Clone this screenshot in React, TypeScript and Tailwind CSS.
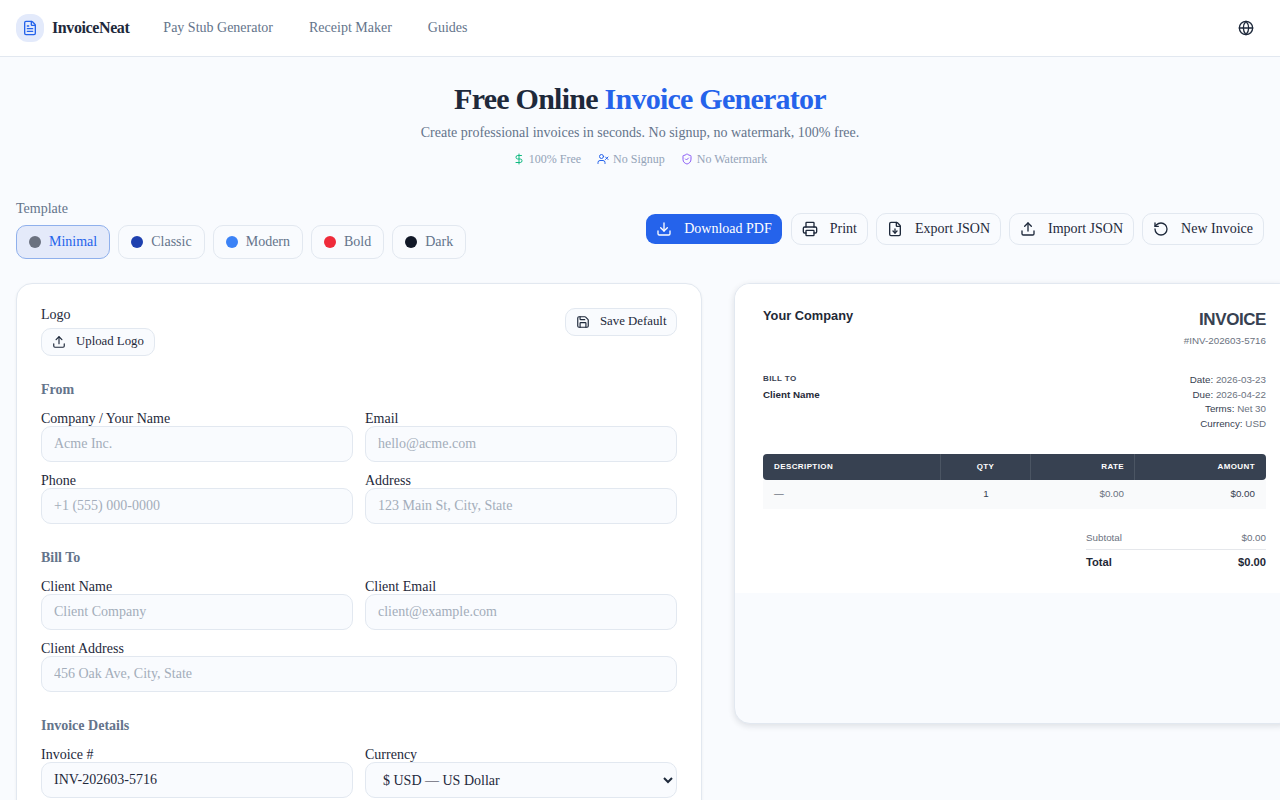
// App.tsx
import React from "react";
import {
  DollarSign,
  Download,
  FileDown,
  FileText,
  Globe,
  Printer,
  RotateCcw,
  Save,
  ShieldCheck,
  Upload,
  UserX,
} from "lucide-react";

const templates = [
  { name: "Minimal", dot: "bg-[#6b7280]", active: true },
  { name: "Classic", dot: "bg-[#1e40af]", active: false },
  { name: "Modern", dot: "bg-[#3b82f6]", active: false },
  { name: "Bold", dot: "bg-[#ef2b3a]", active: false },
  { name: "Dark", dot: "bg-[#111827]", active: false },
];

const actions = [
  { label: "Print", icon: Printer },
  { label: "Export JSON", icon: FileDown },
  { label: "Import JSON", icon: Upload },
  { label: "New Invoice", icon: RotateCcw },
];

const inputClass =
  "h-9 w-full rounded-[10px] border border-[#e2e8f0] bg-[#f9fbfe] px-3 text-sm text-[#1e293b] outline-none placeholder:text-[#a3adba]";

const Field = ({
  label,
  placeholder,
  value,
  className = "",
}: {
  label: string;
  placeholder?: string;
  value?: string;
  className?: string;
}) => (
  <label className={`flex flex-col ${className}`}>
    <span className="pt-px text-sm leading-[15px] text-[#1e293b]">{label}</span>
    <input className={inputClass} placeholder={placeholder} defaultValue={value} />
  </label>
);

const SectionTitle = ({ children }: { children: React.ReactNode }) => (
  <h3 className="mb-[12px] mt-[26px] text-sm font-bold leading-4 text-[#64748b]">{children}</h3>
);

const InvoicePreview = () => (
  <div className="flex h-[441px] w-[561px] shrink-0 flex-col overflow-hidden rounded-2xl border border-[#e2e8f0] bg-[#f9fbfe] shadow-[0_2px_6px_rgba(15,23,42,0.12)] font-['Liberation_Sans',sans-serif]">
    <div className="h-[309px] bg-white px-[28px] pt-6">
      <div className="flex items-start justify-between">
        <div className="text-[12.8px] font-bold leading-4 text-[#1f2937]">Your Company</div>
        <div className="text-right">
          <div className="text-[17px] font-bold leading-[24px] tracking-tight text-[#374151]">INVOICE</div>
          <div className="mt-[3px] text-[9.8px] leading-3 text-[#6b7280]">#INV-202603-5716</div>
        </div>
      </div>
      <div className="mt-[26px] flex items-start justify-between">
        <div>
          <div className="text-[8px] font-bold leading-3 tracking-[0.05em] text-[#374151]">BILL TO</div>
          <div className="mt-[4px] text-[9.8px] font-bold leading-3 text-[#1f2937]">Client Name</div>
        </div>
        <div className="text-right text-[9.8px] leading-[14.5px] text-[#374151]">
          <div>
            Date: <span className="text-[#6b7280]">2026-03-23</span>
          </div>
          <div>
            Due: <span className="text-[#6b7280]">2026-04-22</span>
          </div>
          <div>
            Terms: <span className="text-[#6b7280]">Net 30</span>
          </div>
          <div>
            Currency: <span className="text-[#6b7280]">USD</span>
          </div>
        </div>
      </div>
      <div className="mt-[23px]">
        <div className="grid h-[26px] grid-cols-[178px_90px_104px_131px] items-stretch rounded-[4px] bg-[#374151] text-[8px] font-bold tracking-[0.05em] text-white">
          <div className="flex items-center border-r border-[#4b5563] px-[11px]">DESCRIPTION</div>
          <div className="flex items-center justify-center border-r border-[#4b5563]">QTY</div>
          <div className="flex items-center justify-end border-r border-[#4b5563] pr-[10px]">RATE</div>
          <div className="flex items-center justify-end px-[11px]">AMOUNT</div>
        </div>
        <div className="grid h-[29px] grid-cols-[178px_90px_104px_131px] items-center bg-[#f9fafb] text-[9.8px] text-[#374151]">
          <div className="px-[11px]">—</div>
          <div className="text-center">1</div>
          <div className="pr-[11px] text-right text-[#6b7280]">$0.00</div>
          <div className="px-[11px] text-right">$0.00</div>
        </div>
      </div>
      <div className="ml-auto mt-[22px] w-[180px]">
        <div className="flex h-[14px] items-center justify-between text-[9.8px] text-[#6b7280]">
          <span>Subtotal</span>
          <span>$0.00</span>
        </div>
        <div className="mt-[4px] flex items-center justify-between border-t border-[#e5e7eb] pt-[5px] text-[11.2px] font-bold leading-[14px] text-[#1f2937]">
          <span>Total</span>
          <span>$0.00</span>
        </div>
      </div>
    </div>
  </div>
);

export default function App() {
  return (
    <div className="h-screen overflow-hidden bg-[#f9fbfe] font-['Liberation_Serif',serif] text-[#1e293b]">
      {/* 상단 네비게이션 */}
      <header className="flex h-[57px] items-center justify-between border-b border-[#e2e8f0] bg-white px-4">
        <div className="flex items-center gap-[34px]">
          <div className="flex items-center gap-2">
            <div className="flex h-7 w-7 items-center justify-center rounded-[12px] bg-[#e3eafb]">
              <FileText size={16} className="text-[#2563eb]" />
            </div>
            <span className="text-base font-bold tracking-tight text-[#1e293b]">InvoiceNeat</span>
          </div>
          <nav className="flex items-center gap-9 text-sm text-[#64748b]">
            <a>Pay Stub Generator</a>
            <a>Receipt Maker</a>
            <a>Guides</a>
          </nav>
        </div>
        <Globe size={16} className="mr-[10px] text-[#1e293b]" />
      </header>

      {/* 히어로 */}
      <section className="flex flex-col items-center pt-[24px]">
        <h1 className="text-3xl leading-9 font-bold tracking-tight text-[#1e293b]">
          Free Online <span className="text-[#2563eb]">Invoice Generator</span>
        </h1>
        <p className="mt-[6px] text-sm leading-5 text-[#64748b]">
          Create professional invoices in seconds. No signup, no watermark, 100% free.
        </p>
        <div className="mt-[6px] flex items-center gap-4 text-xs leading-5 text-[#94a3b8]">
          <span className="flex items-center gap-[4px]">
            <DollarSign size={12} className="text-[#10b981]" />
            100% Free
          </span>
          <span className="flex items-center gap-[4px]">
            <UserX size={12} className="text-[#2563eb]" />
            No Signup
          </span>
          <span className="flex items-center gap-[4px]">
            <ShieldCheck size={12} className="text-[#8b5cf6]" />
            No Watermark
          </span>
        </div>
      </section>

      {/* 템플릿 + 액션 */}
      <section className="mt-[30px] flex items-start justify-between px-4">
        <div>
          <div className="text-sm leading-5 text-[#64748b]">Template</div>
          <div className="mt-[6px] flex gap-2">
            {templates.map((t) => (
              <button
                key={t.name}
                className={`flex h-[34px] items-center gap-2 rounded-[10px] border px-3 text-sm ${
                  t.active
                    ? "border-[#8fb0ec] bg-[#e4eafa] text-[#2563eb]"
                    : "border-[#e2e8f0] bg-[#f9fbfe] text-[#64748b]"
                }`}
              >
                <span className={`h-3 w-3 rounded-full ${t.dot}`} />
                {t.name}
              </button>
            ))}
          </div>
        </div>
        <div className="mt-[14px] flex items-center gap-2">
          <button className="flex h-8 items-center gap-3 rounded-[10px] border border-transparent bg-[#2563eb] bg-clip-padding px-[10px] text-sm text-white">
            <Download size={16} />
            Download PDF
          </button>
          {actions.map((a) => (
            <button
              key={a.label}
              className="flex h-8 items-center gap-3 rounded-[10px] border border-[#e2e8f0] bg-[#f9fbfe] px-[10px] text-sm text-[#1e293b]"
            >
              <a.icon size={16} />
              {a.label}
            </button>
          ))}
        </div>
      </section>

      <main className="mt-[24px] flex items-start gap-8 pl-4">
        {/* 입력 폼 */}
        <div className="w-[686px] shrink-0 rounded-2xl border border-[#e2e8f0] bg-white px-6 pb-6 pt-6 shadow-[0_1px_3px_rgba(15,23,42,0.06)]">
          <div className="flex items-start justify-between">
            <div>
              <div className="h-3 text-sm leading-[14px] text-[#1e293b]">Logo</div>
              <button className="mt-2 flex h-7 w-[114px] items-center gap-[10px] whitespace-nowrap rounded-[10px] border border-[#e2e8f0] bg-[#f9fbfe] px-[10px] pb-px text-[12.8px] text-[#1e293b]">
                <Upload size={14} className="shrink-0" />
                Upload Logo
              </button>
            </div>
            <button className="flex h-7 w-[112px] items-center gap-[10px] whitespace-nowrap rounded-[10px] border border-[#e2e8f0] bg-[#f9fbfe] px-[10px] pb-px text-[12.8px] text-[#1e293b]">
              <Save size={14} className="shrink-0" />
              Save Default
            </button>
          </div>

          <SectionTitle>From</SectionTitle>
          <div className="grid grid-cols-2 gap-x-3 gap-y-[10px]">
            <Field label="Company / Your Name" placeholder="Acme Inc." />
            <Field label="Email" placeholder="hello@acme.com" />
            <Field label="Phone" placeholder="+1 (555) 000-0000" />
            <Field label="Address" placeholder="123 Main St, City, State" />
          </div>

          <SectionTitle>Bill To</SectionTitle>
          <div className="grid grid-cols-2 gap-x-3 gap-y-[10px]">
            <Field label="Client Name" placeholder="Client Company" />
            <Field label="Client Email" placeholder="client@example.com" />
            <Field label="Client Address" placeholder="456 Oak Ave, City, State" className="col-span-2" />
          </div>

          <SectionTitle>Invoice Details</SectionTitle>
          <div className="grid grid-cols-2 gap-x-3 gap-y-[10px]">
            <Field label="Invoice #" value="INV-202603-5716" />
            <label className="flex flex-col">
              <span className="pt-px text-sm leading-[15px] text-[#1e293b]">Currency</span>
              <select
                className="h-9 w-full rounded-[10px] border border-[#e2e8f0] bg-[#f9fbfe] pl-[13px] pr-3 text-sm text-[#1e293b] outline-none"
                defaultValue="USD"
              >
                <option value="USD">$ USD — US Dollar</option>
              </select>
            </label>
          </div>
        </div>

        <InvoicePreview />
      </main>
    </div>
  );
}
